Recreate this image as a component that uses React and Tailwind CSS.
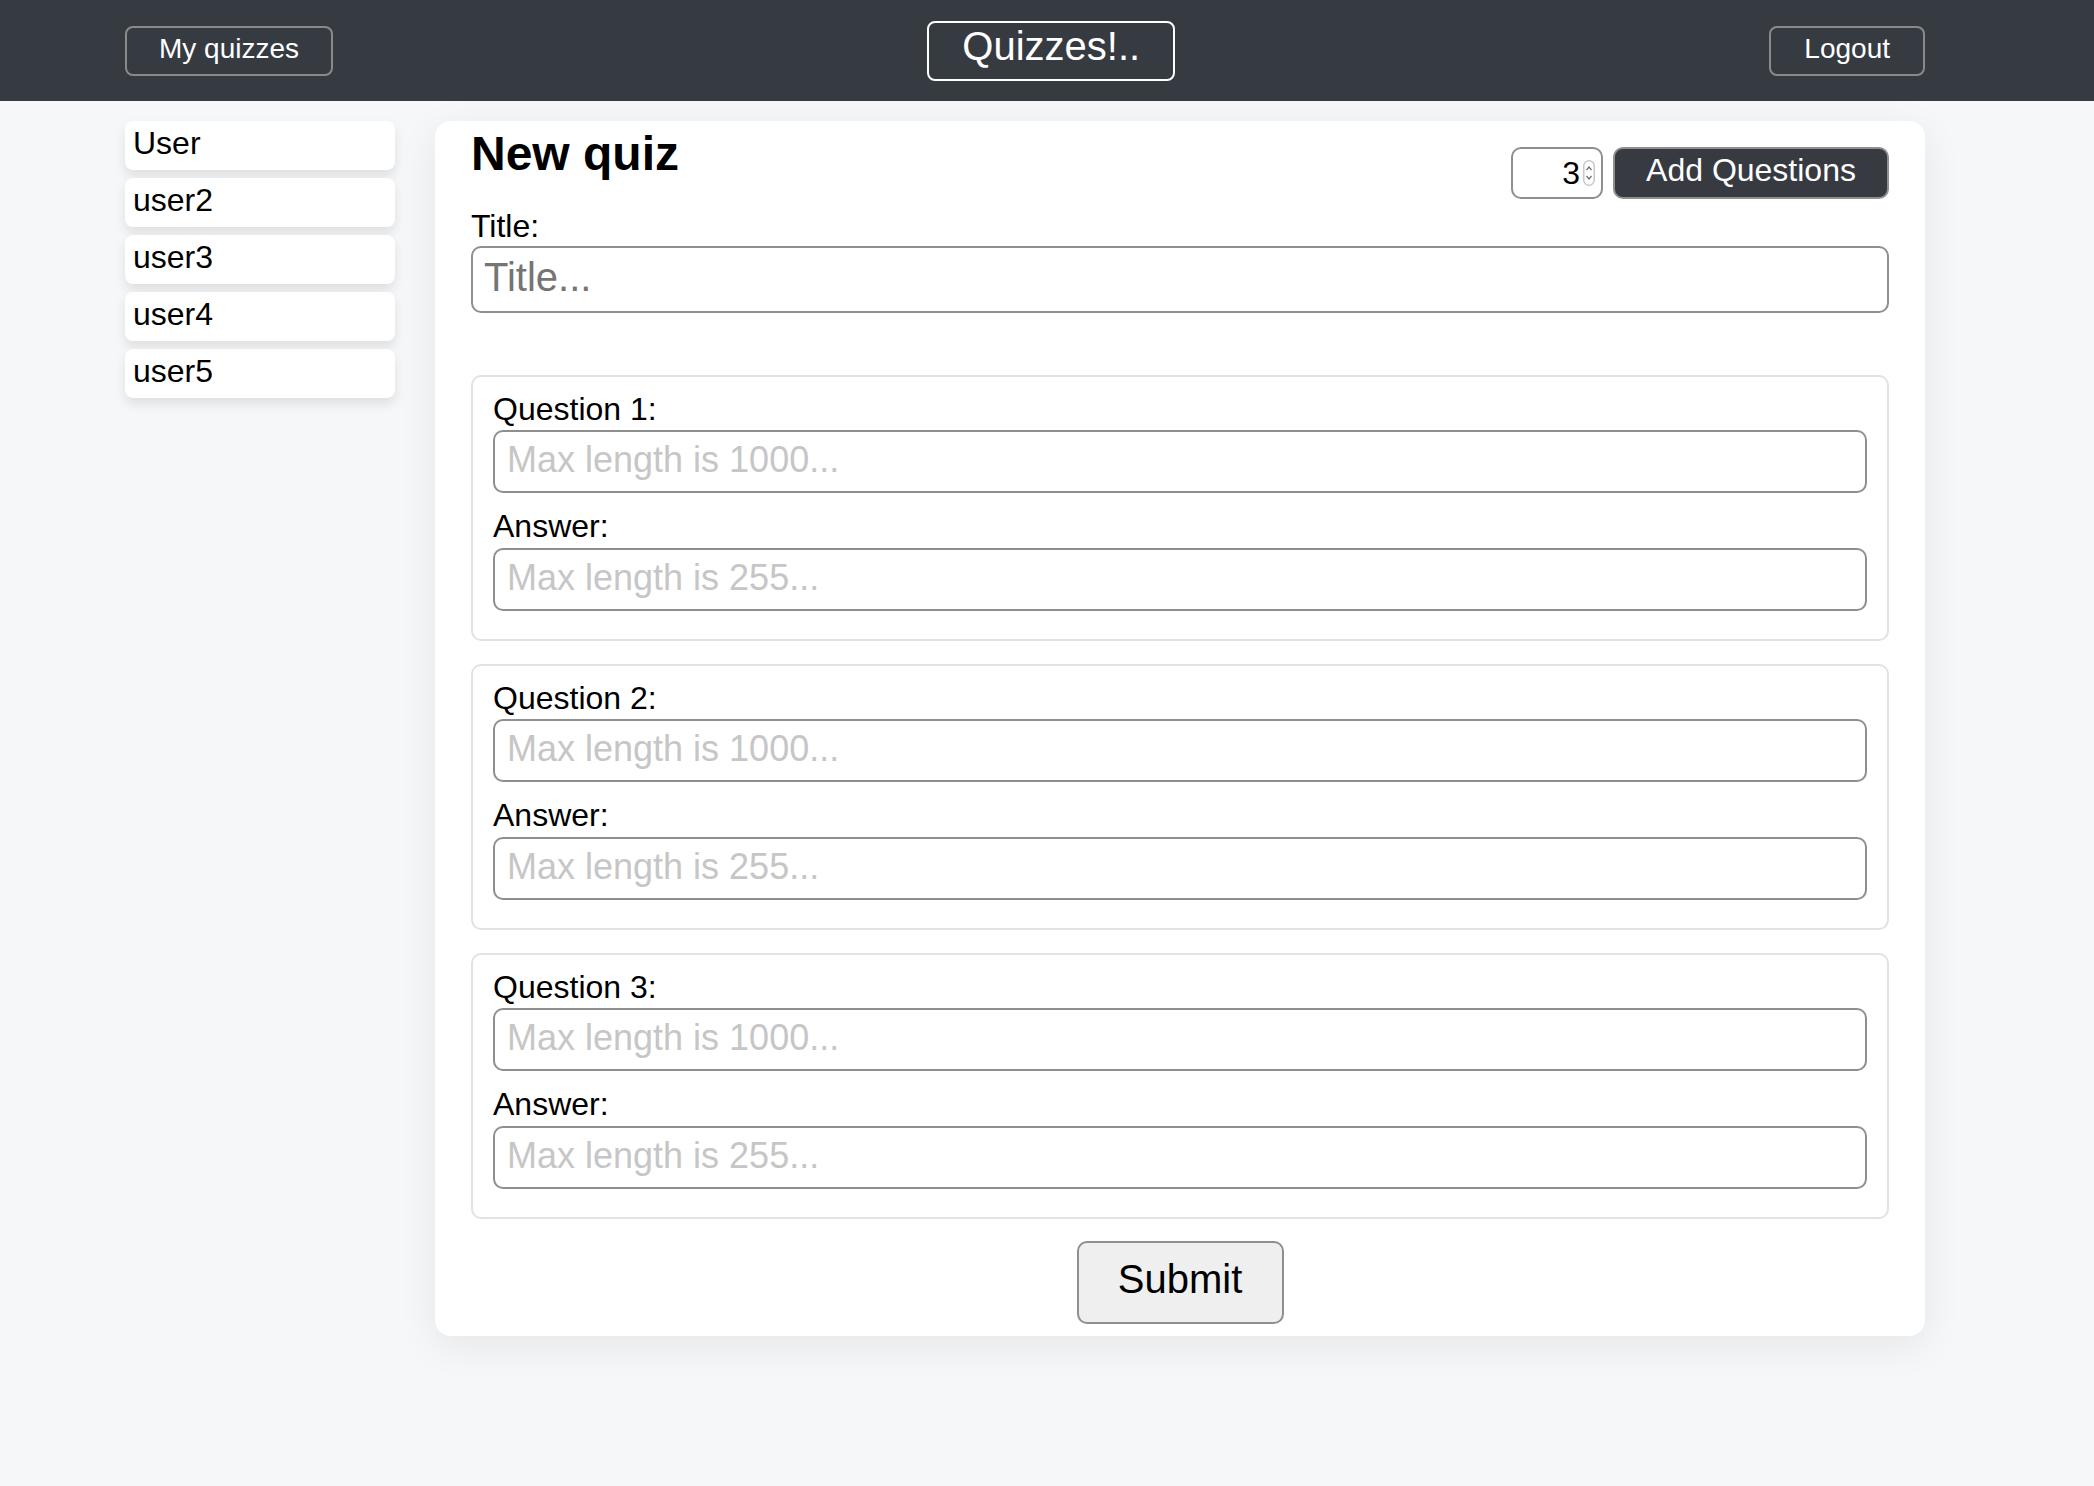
import { useState } from 'react';

const users = ['User', 'user2', 'user3', 'user4', 'user5'];

const Spinner = () => (
  <svg width="12" height="26" viewBox="0 0 12 26" className="ml-[3px]">
    <rect x="0.75" y="0.75" width="10.5" height="24.5" rx="5.25" fill="#fff" stroke="#c8c8c8" strokeWidth="1.5" />
    <path d="M3.5 10 L6 7 L8.5 10" fill="none" stroke="#6b6b6b" strokeWidth="1.2" />
    <path d="M3.5 16 L6 19 L8.5 16" fill="none" stroke="#6b6b6b" strokeWidth="1.2" />
  </svg>
);

const QuestionBox = ({ n }) => (
  <div className="border-2 border-[#e2e2e2] rounded-[10px] px-[20px] pt-[14px] pb-[28px]">
    <label className="block text-[32px] leading-[37px] text-black">Question {n}:</label>
    <input
      type="text"
      placeholder="Max length is 1000..."
      className="mt-[2px] block w-full h-[63px] border-2 border-[#8f8f8f] rounded-[10px] px-[12px] pb-[4px] text-[36px] placeholder:text-[#c6c6c6] outline-none"
    />
    <label className="mt-[15px] block text-[32px] leading-[37px] text-black">Answer:</label>
    <input
      type="text"
      placeholder="Max length is 255..."
      className="mt-[3px] block w-full h-[63px] border-2 border-[#8f8f8f] rounded-[10px] px-[12px] pb-[4px] text-[36px] placeholder:text-[#c6c6c6] outline-none"
    />
  </div>
);

export default function App() {
  const [count] = useState(3);

  return (
    <div className="min-h-screen bg-[#f6f7f9] font-['Liberation_Sans',Arial,sans-serif]">
      {/* header */}
      <div className="h-[101px] bg-[#363a41]">
        <div className="ml-[125px] w-[1800px] h-full flex items-center justify-between">
          <button className="h-[50px] px-[32px] pb-[4px] border-2 border-[#8a8a8a] rounded-[8px] text-white text-[28px]">
            My quizzes
          </button>
          <button className="h-[60px] px-[33px] pb-[10px] border-2 border-white rounded-[8px] text-white text-[40px] leading-[40px]">
            Quizzes!..
          </button>
          <button className="h-[50px] px-[33px] pb-[4px] border-2 border-[#8a8a8a] rounded-[8px] text-white text-[28px]">
            Logout
          </button>
        </div>
      </div>

      <div className="ml-[125px] w-[1800px] pt-[20px] flex gap-[40px] items-start">
        {/* sidebar */}
        <div className="w-[270px] flex flex-col gap-[8px]">
          {users.map((u) => (
            <div
              key={u}
              className="h-[49px] bg-white rounded-[8px] pl-[8px] pt-[4px] text-[32px] leading-[37px] text-black shadow-[0_6px_12px_rgba(0,0,0,0.1)]"
            >
              {u}
            </div>
          ))}
        </div>

        {/* main card */}
        <div className="flex-1 bg-white rounded-[16px] px-[36px] pt-[6px] pb-[12px] shadow-[0_10px_40px_rgba(0,0,0,0.07)]">
          <div className="flex justify-between items-start">
            <h1 className="text-[48px] leading-[53px] font-bold text-black">New quiz</h1>
            <div className="mt-[20px] flex gap-[10px]">
              <div className="w-[92px] h-[52px] border-2 border-[#8f8f8f] rounded-[10px] flex items-center justify-end pr-[6px]">
                <span className="text-[32px] text-black leading-none">{count}</span>
                <Spinner />
              </div>
              <button className="w-[276px] h-[52px] pb-[7px] bg-[#373a41] border-2 border-[#8f8f8f] rounded-[10px] text-white text-[32px] leading-[36px]">
                Add Questions
              </button>
            </div>
          </div>

          <label className="mt-[9px] block text-[32px] leading-[37px] text-black">Title:</label>
          <input
            type="text"
            placeholder="Title..."
            className="mt-[1px] block w-full h-[67px] border-2 border-[#8f8f8f] rounded-[10px] px-[11px] pb-[4px] text-[40px] placeholder:text-[#757575] outline-none"
          />

          <div className="mt-[62px] flex flex-col gap-[23px]">
            {[1, 2, 3].map((n) => (
              <QuestionBox key={n} n={n} />
            ))}
          </div>

          <div className="mt-[22px] flex justify-center">
            <button className="w-[207px] h-[83px] pb-[7px] bg-[#efefef] border-2 border-[#8f8f8f] rounded-[10px] text-[40px] text-black">
              Submit
            </button>
          </div>
        </div>
      </div>
    </div>
  );
}
